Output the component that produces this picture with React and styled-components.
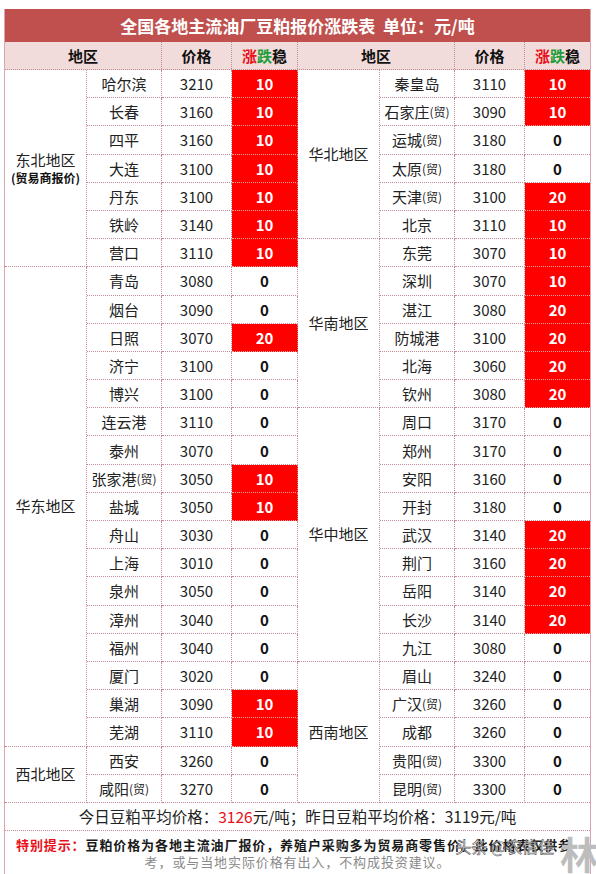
import React from 'react';
import styled, { createGlobalStyle } from 'styled-components';

const GlobalStyle = createGlobalStyle`
  body {
    margin: 0;
    background: #fff;
    font-family: "Noto Sans CJK SC", "Noto Sans", sans-serif;
    color: #222;
  }
`;

const ROW_H = 28.2;
const LINE = '1px dotted #c48a96';

const Sheet = styled.div`
  width: 585px;
  margin: 9px 0 0 4px;
  border-left: 1px solid #d9a6ae;
  border-right: 1px solid #d9a6ae;
`;

const TitleBar = styled.div`
  height: 33px;
  background: #c0504d;
  color: #fff;
  font-size: 17px;
  font-weight: 700;
  display: flex;
  align-items: center;
  justify-content: center;
  white-space: pre;
`;

const HeaderRow = styled.div`
  display: grid;
  grid-template-columns: 157px 70px 66px 157px 70px 65px;
  height: 28px;
  background: #f2dcdb;
  border-bottom: ${LINE};
  box-sizing: border-box;
`;

const HeadCell = styled.div`
  display: flex;
  align-items: center;
  justify-content: center;
  font-size: 15px;
  font-weight: 700;
  color: #111;
  border-right: ${(p) => (p.$last ? 'none' : LINE)};
`;

const Up = styled.span`
  color: #e8101a;
`;

const Down = styled.span`
  color: #1f9e3a;
`;

const Body = styled.div`
  display: flex;
`;

const Half = styled.div`
  display: grid;
  grid-template-columns: 82px 75px 70px ${(p) => p.$lastW}px;
  grid-template-rows: repeat(26, ${ROW_H}px);
`;

const Cell = styled.div`
  display: flex;
  align-items: center;
  justify-content: center;
  box-sizing: border-box;
  border-right: ${(p) => (p.$noRight ? 'none' : LINE)};
  border-bottom: ${LINE};
  font-size: 15px;
  color: #222;
  white-space: nowrap;
`;

const Region = styled(Cell)`
  grid-column: 1;
  grid-row: span ${(p) => p.$span};
  flex-direction: column;
  line-height: 1.35;
`;

const RegionNote = styled.span`
  font-size: 12px;
  font-weight: 700;
  color: #111;
`;

const Trade = styled.span`
  font-size: 12px;
`;

const Change = styled(Cell)`
  font-weight: 700;
  font-size: 15px;
  background: ${(p) => (p.$up ? '#ff0000' : '#fff')};
  color: ${(p) => (p.$up ? '#fff' : '#111')};
  border-bottom: 1px dotted ${(p) => (p.$up ? '#f7a0a0' : '#c48a96')};
`;

const AvgRow = styled.div`
  height: 28px;
  display: flex;
  align-items: center;
  justify-content: center;
  font-size: 15.5px;
  color: #222;
  border-bottom: ${LINE};
  box-sizing: border-box;
`;

const Red = styled.span`
  color: #e8101a;
`;

const Tips = styled.div`
  position: relative;
  height: 50px;
  padding-top: 5px;
  box-sizing: border-box;
  font-size: 13px;
  font-weight: 700;
  letter-spacing: 0.9px;
  line-height: 17px;
`;

const TipLine = styled.div`
  padding-left: 11px;
  color: #1a1a1a;
  white-space: nowrap;
`;

const TipLabel = styled.span`
  color: #e8101a;
`;

const TipTail = styled.div`
  text-align: center;
  color: #8a8a8a;
  font-weight: 400;
  white-space: nowrap;
`;

const Watermark = styled.div`
  position: absolute;
  right: 36px;
  top: 7px;
  font-size: 16px;
  font-weight: 400;
  letter-spacing: 0;
  color: #fff;
  -webkit-text-stroke: 0.6px #444;
  opacity: 0.9;
`;

const Seal = styled.div`
  position: absolute;
  right: -8px;
  top: 0;
  font-size: 38px;
  line-height: 44px;
  font-weight: 700;
  letter-spacing: 0;
  color: #bdbdbd;
`;

const left = {
  groups: [
    { name: '东北地区', note: '(贸易商报价)', rows: [
      ['哈尔滨', 3210, 10], ['长春', 3160, 10], ['四平', 3160, 10], ['大连', 3100, 10],
      ['丹东', 3100, 10], ['铁岭', 3140, 10], ['营口', 3110, 10],
    ] },
    { name: '华东地区', rows: [
      ['青岛', 3080, 0], ['烟台', 3090, 0], ['日照', 3070, 20], ['济宁', 3100, 0],
      ['博兴', 3100, 0], ['连云港', 3110, 0], ['泰州', 3070, 0], ['张家港*', 3050, 10],
      ['盐城', 3050, 10], ['舟山', 3030, 0], ['上海', 3010, 0], ['泉州', 3050, 0],
      ['漳州', 3040, 0], ['福州', 3040, 0], ['厦门', 3020, 0], ['巢湖', 3090, 10],
      ['芜湖', 3110, 10],
    ] },
    { name: '西北地区', rows: [['西安', 3260, 0], ['咸阳*', 3270, 0]] },
  ],
};

const right = {
  groups: [
    { name: '华北地区', rows: [
      ['秦皇岛', 3110, 10], ['石家庄*', 3090, 10], ['运城*', 3180, 0], ['太原*', 3180, 0],
      ['天津*', 3100, 20], ['北京', 3110, 10],
    ] },
    { name: '华南地区', rows: [
      ['东莞', 3070, 10], ['深圳', 3070, 10], ['湛江', 3080, 20], ['防城港', 3100, 20],
      ['北海', 3060, 20], ['钦州', 3080, 20],
    ] },
    { name: '华中地区', rows: [
      ['周口', 3170, 0], ['郑州', 3170, 0], ['安阳', 3160, 0], ['开封', 3180, 0],
      ['武汉', 3140, 20], ['荆门', 3160, 20], ['岳阳', 3140, 20], ['长沙', 3140, 20],
      ['九江', 3080, 0],
    ] },
    { name: '西南地区', rows: [
      ['眉山', 3240, 0], ['广汉*', 3260, 0], ['成都', 3260, 0], ['贵阳*', 3300, 0],
      ['昆明*', 3300, 0],
    ] },
  ],
};

function City({ name }) {
  if (name.endsWith('*')) {
    return <>{name.slice(0, -1)}<Trade>(贸)</Trade></>;
  }
  return name;
}

function Side({ data, isRight }) {
  return (
    <Half $lastW={isRight ? 65 : 66}>
      {data.groups.map((g) => (
        <React.Fragment key={g.name}>
          <Region $span={g.rows.length}>
            <span>{g.name}</span>
            {g.note && <RegionNote>{g.note}</RegionNote>}
          </Region>
          {g.rows.map(([city, price, chg]) => (
            <React.Fragment key={city}>
              <Cell><City name={city} /></Cell>
              <Cell>{price}</Cell>
              <Change $up={chg > 0} $noRight={isRight}>{chg}</Change>
            </React.Fragment>
          ))}
        </React.Fragment>
      ))}
    </Half>
  );
}

export default function App() {
  return (
    <>
      <GlobalStyle />
      <Sheet>
        <TitleBar>全国各地主流油厂豆粕报价涨跌表  单位：元/吨</TitleBar>
        <HeaderRow>
          <HeadCell>地区</HeadCell>
          <HeadCell>价格</HeadCell>
          <HeadCell><Up>涨</Up><Down>跌</Down>稳</HeadCell>
          <HeadCell>地区</HeadCell>
          <HeadCell>价格</HeadCell>
          <HeadCell $last><Up>涨</Up><Down>跌</Down>稳</HeadCell>
        </HeaderRow>
        <Body>
          <Side data={left} />
          <Side data={right} isRight />
        </Body>
        <AvgRow>
          今日豆粕平均价格：<Red>3126</Red>元/吨；昨日豆粕平均价格：3119元/吨
        </AvgRow>
        <Tips>
          <TipLine>
            <TipLabel>特别提示：</TipLabel>豆粕价格为各地主流油厂报价，养殖户采购多为贸易商零售价。此价格表仅供参
          </TipLine>
          <TipTail>考，或与当地实际价格有出入，不构成投资建议。</TipTail>
          <Watermark>头条 @农信佳</Watermark>
          <Seal>林</Seal>
        </Tips>
      </Sheet>
    </>
  );
}
